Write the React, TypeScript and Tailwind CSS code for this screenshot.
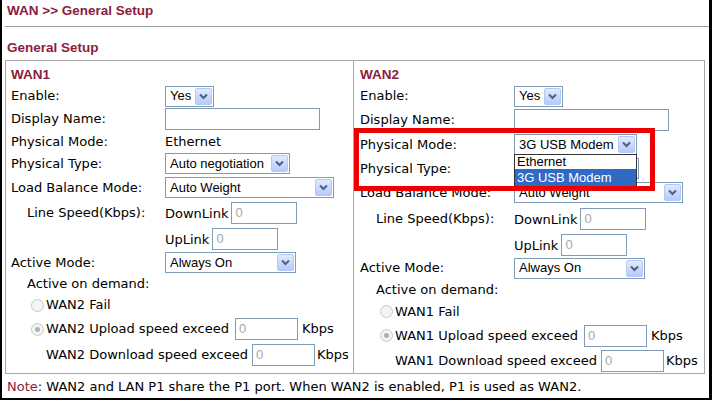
import React from "react";

const body = "font-['DejaVu_Sans',Verdana,sans-serif] text-[13px] text-black";
const ctrl = "font-['Liberation_Sans',Arial,sans-serif] text-[13px]";

function Chevron() {
  return (
    <svg width="9" height="7" viewBox="0 0 9 7">
      <path d="M1 1.5 L4.5 5 L8 1.5" fill="none" stroke="#4d6185" strokeWidth="2" />
    </svg>
  );
}

function Select({ value, w }: { value: string; w: string }) {
  return (
    <div className={`${w} h-[21px] flex items-stretch border border-[#7f9db9] bg-white ${ctrl}`}>
      <div className="flex-1 flex items-center pl-[4px] whitespace-nowrap overflow-hidden">{value}</div>
      <div className="w-[17px] m-[1px] flex items-center justify-center rounded-[2px] border border-[#b4c8f5] bg-gradient-to-b from-[#e1eafe] to-[#b6cbf8]">
        <Chevron />
      </div>
    </div>
  );
}

function Input({ w, value }: { w: string; value?: string }) {
  return (
    <div className={`${w} h-[22px] flex items-center border border-[#7f9db9] bg-white pl-[3px] text-[#a8a8a8] ${ctrl}`}>
      {value}
    </div>
  );
}

function Radio({ checked }: { checked?: boolean }) {
  return (
    <div className="w-[13px] h-[13px] rounded-full border border-[#c9c9c9] bg-[#f4f4f4] flex items-center justify-center shrink-0">
      {checked && <div className="w-[5px] h-[5px] rounded-full bg-[#b0b0b0]" />}
    </div>
  );
}

function Label({ children, indent }: { children: React.ReactNode; indent?: boolean }) {
  return <div className={`w-[154px] shrink-0 whitespace-nowrap ${indent ? "pl-[16px]" : ""}`}>{children}</div>;
}

function WanColumn({ side }: { side: 1 | 2 }) {
  const other = side === 1 ? "WAN2" : "WAN1";
  const h =
    side === 1
      ? ["h-[20px]", "h-[22px]", "h-[24px]", "h-[21px]", "h-[23px]", "h-[25px]", "h-[26px]", "h-[25px]", "h-[23px]", "h-[20px]", "h-[22px]", "h-[26px]", "h-[26px]"]
      : ["h-[20px]", "h-[22px]", "h-[25px]", "h-[25px]", "h-[23px]", "h-[25px]", "h-[27px]", "h-[25px]", "h-[22px]", "h-[21px]", "h-[23px]", "h-[25px]", "h-[25px]"];

  return (
    <div className="flex flex-col">
      <div className={`${h[0]} flex items-center font-['Liberation_Sans',Arial,sans-serif] font-bold text-[13.5px] text-[#8c1d40]`}>
        WAN{side}
      </div>
      <div className={`${h[1]} flex items-center`}>
        <Label>Enable:</Label>
        <Select value="Yes" w="w-[49px]" />
      </div>
      <div className={`${h[2]} flex items-center`}>
        <Label>Display Name:</Label>
        <Input w="w-[155px]" />
      </div>
      <div className={`${h[3]} flex items-center`}>
        <Label>Physical Mode:</Label>
        {side === 1 ? (
          <span>Ethernet</span>
        ) : (
          <div className="relative">
            <Select value="3G USB Modem" w="w-[123px]" />
            {/* open dropdown list */}
            <div className={`absolute left-0 top-[20px] z-10 w-[123px] border border-[#333] bg-white ${ctrl}`}>
              <div className="h-[14px] leading-[14px] pl-[2px]">Ethernet</div>
              <div className="h-[18px] leading-[18px] pl-[2px] bg-[#316ac5] text-white">3G USB Modem</div>
            </div>
          </div>
        )}
      </div>
      <div className={`${h[4]} flex items-center`}>
        <Label>Physical Type:</Label>
        {/* on WAN2 this select sits under the open list */}
        <Select value={side === 1 ? "Auto negotiation" : ""} w="w-[125px]" />
      </div>
      <div className={`${h[5]} flex items-center`}>
        <Label>Load Balance Mode:</Label>
        <Select value="Auto Weight" w="w-[169px]" />
      </div>
      <div className={`${h[6]} flex items-center`}>
        <Label indent>Line Speed(Kbps):</Label>
        <span className="pt-[2px]">DownLink</span>
        <div className="ml-[3px]">
          <Input w="w-[66px]" value="0" />
        </div>
      </div>
      <div className={`${h[7]} flex items-center`}>
        <Label>{""}</Label>
        <span className="pt-[2px]">UpLink</span>
        <div className="ml-[3px]">
          <Input w="w-[66px]" value="0" />
        </div>
      </div>
      <div className={`${h[8]} flex items-center`}>
        <Label>Active Mode:</Label>
        <Select value="Always On" w="w-[131px]" />
      </div>
      <div className={`${h[9]} flex items-center pl-[16px]`}>Active on demand:</div>
      <div className={`${h[10]} flex items-center pl-[20px] gap-[2px]`}>
        <Radio />
        <span>{other} Fail</span>
      </div>
      <div className={`${h[11]} flex items-center pl-[20px] gap-[2px] whitespace-nowrap`}>
        <Radio checked />
        <span>{other} Upload speed exceed</span>
        <div className="ml-[4px]">
          <Input w="w-[63px]" value="0" />
        </div>
        <span className="ml-[2px]">Kbps</span>
      </div>
      <div className={`${h[12]} flex items-center pl-[35px] whitespace-nowrap`}>
        <span>{other} Download speed exceed</span>
        <div className="ml-[4px]">
          <Input w="w-[63px]" value="0" />
        </div>
        <span className="ml-[2px]">Kbps</span>
      </div>
    </div>
  );
}

export default function App() {
  return (
    <div className={`relative w-[713px] h-[401px] bg-white overflow-hidden ${body}`}>
      <div className="w-[712px] h-[400px] border-l-2 border-r-[3px] border-b-2 border-black">
        <div className="ml-[3px]">
          <div className="h-[27px] pb-[3px] pl-[2px] flex items-center border-b border-[#a0a0a0] font-['Liberation_Sans',Arial,sans-serif] font-bold text-[13.5px] text-[#8c1d40]">
            WAN &gt;&gt; General Setup
          </div>
          <div className="h-[33px] pb-[2px] pl-[2px] flex items-end font-['Liberation_Sans',Arial,sans-serif] font-bold text-[13.5px] text-[#8c1d40]">
            General Setup
          </div>
          <div className="w-[700px] h-[314px] border border-[#a8a8a8] grid grid-cols-[348px_1fr]">
            <div className="border-r border-[#a8a8a8] pl-[5px] pt-[4px]">
              <WanColumn side={1} />
            </div>
            <div className="pl-[6px] pt-[4px]">
              <WanColumn side={2} />
            </div>
          </div>
          <div className="h-[25px] pl-[2px] flex items-center">
            <span className="text-[#8c1d40]">Note</span>
            <span>: WAN2 and LAN P1 share the P1 port. When WAN2 is enabled, P1 is used as WAN2.</span>
          </div>
        </div>
      </div>
      {/* red highlight annotation */}
      <div className="absolute left-[354px] top-[128px] w-[301px] h-[63px] border-[5px] border-[#ee0000] z-20" />
    </div>
  );
}
